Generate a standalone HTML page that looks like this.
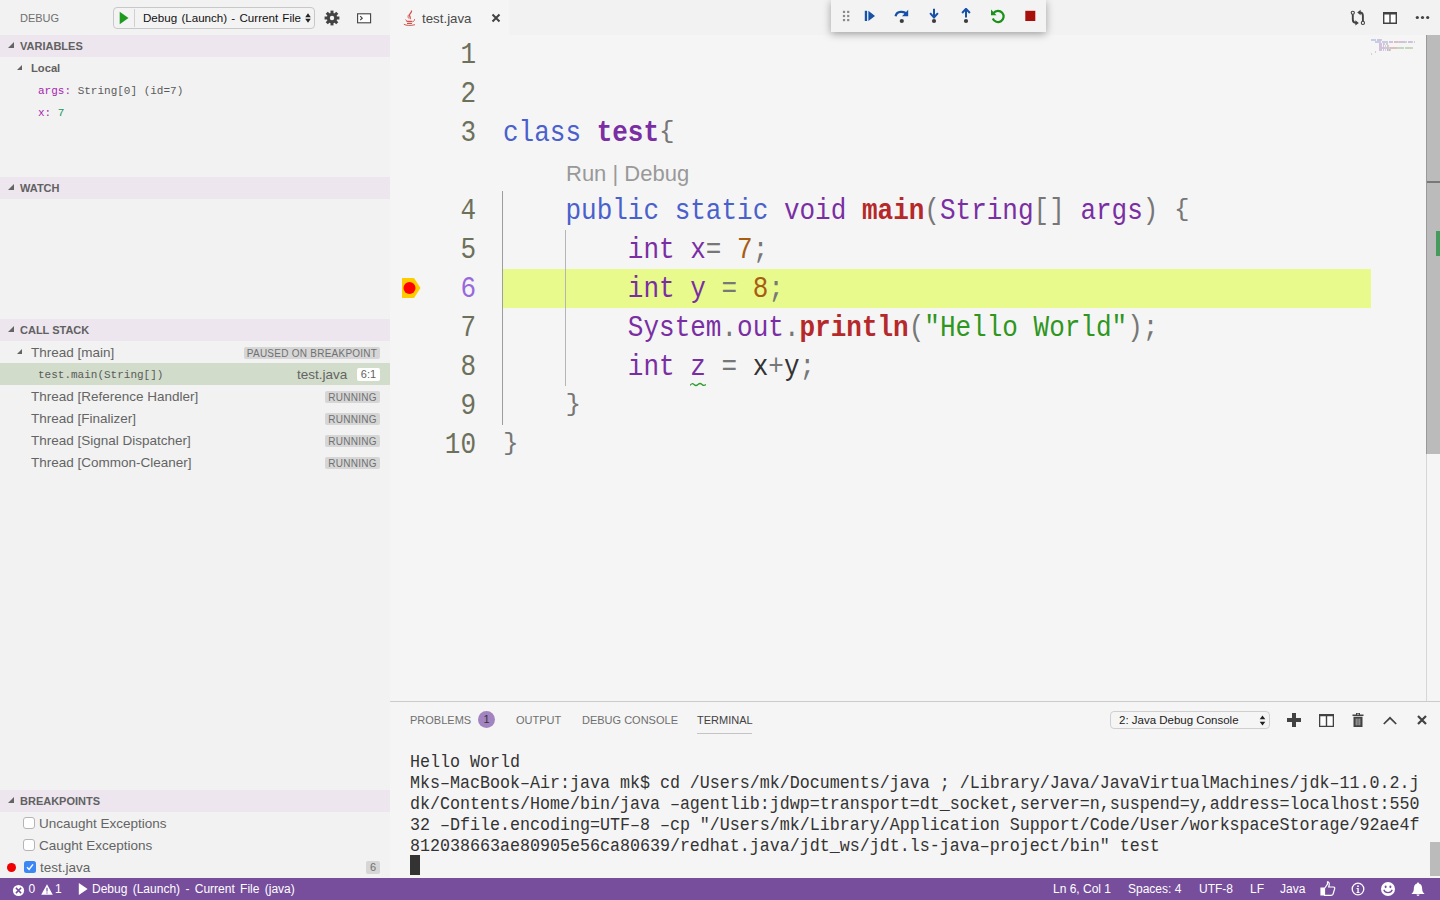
<!DOCTYPE html>
<html><head><meta charset="utf-8">
<style>
*{box-sizing:border-box;margin:0;padding:0}
html,body{width:1440px;height:900px;overflow:hidden;background:#f5f5f5;font-family:"Liberation Sans",sans-serif;}
.abs{position:absolute}
#sidebar{position:absolute;left:0;top:0;width:390px;height:878px;background:#f2f2f2;overflow:hidden}
.sh{position:absolute;left:0;width:390px;height:22px;background:#ede6ef;color:#616161;font-weight:bold;font-size:11px}
.sh span{position:absolute;left:20px;top:5px}
.tw{position:absolute;width:0;height:0;border-style:solid;border-width:0 0 6px 6px;border-color:transparent transparent #646464 transparent}
.row{position:absolute;left:0;width:390px;height:22px;font-size:13.5px;color:#646464}
.mono{font-family:"Liberation Mono",monospace}
#tabs{position:absolute;left:390px;top:0;width:1050px;height:35px;background:#f2f2f2}
#editor{position:absolute;left:390px;top:35px;width:1050px;height:666px;background:#f5f5f5;overflow:hidden}
.ln{position:absolute;left:0;width:86px;text-align:right;font-family:"Liberation Mono",monospace;font-size:26px;line-height:39px;height:39px;color:#6d705b;transform-origin:0 26.4px;transform:translateY(1.6px) scaleY(1.13)}
.cl{position:absolute;left:113px;white-space:pre;font-family:"Liberation Mono",monospace;font-size:26px;line-height:39px;height:39px;color:#333;transform-origin:0 26.4px;transform:translateY(1.6px) scaleY(1.13)}
.k{color:#4a60cc}.v{color:#7a2ea3}.tb{color:#7a2ea3;font-weight:bold}.fn{color:#b5292b;font-weight:bold}
.br{display:inline-block;transform:translateY(-1px) scaleY(0.84);transform-origin:50% 50%}
.n{color:#a85c12}.s{color:#2f961e}.p{color:#777777}
#panel{position:absolute;left:390px;top:701px;width:1050px;height:177px;background:#f5f5f5;border-top:1px solid #cbcbcb}
.pt{position:absolute;top:14px;font-size:11px;color:#6f6f6f}
.term{position:absolute;left:20px;white-space:pre;font-family:"Liberation Mono",monospace;font-size:16.67px;line-height:21px;color:#333}
.term div{height:21px;transform-origin:0 14.9px;transform:scaleY(1.15)}
#status{position:absolute;left:0;top:878px;width:1440px;height:22px;background:#774e9c;color:#fff;font-size:12px}
.badge{position:absolute;background:#d6d6d6;color:#707070;font-size:10px;height:12px;line-height:13.5px;border-radius:2px;text-align:center;letter-spacing:0.25px}
</style></head><body>

<div id="sidebar">
  <div class="abs" style="left:20px;top:12px;font-size:11px;color:#6f6f6f">DEBUG</div>
  <!-- launch dropdown -->
  <div class="abs" style="left:113px;top:7px;width:202px;height:22px;border:1px solid #c8c8c8;border-radius:4px;background:#f3f3f3"></div>
  <div class="abs" style="left:134px;top:9px;width:1px;height:18px;background:#d0d0d0"></div>
  <svg class="abs" style="left:119px;top:11px" width="10" height="14" viewBox="0 0 10 14"><path d="M0.7 0.8 L9.5 7 L0.7 13.2Z" fill="#1e9a1e"/></svg>
  <div class="abs" style="left:143px;top:11px;font-size:11.6px;word-spacing:1px;color:#111">Debug (Launch) - Current File</div>
  <svg class="abs" style="left:304px;top:13px" width="8" height="10" viewBox="0 0 8 10"><path d="M4 0.3 L6.8 4.2 H1.2Z M4 9.7 L6.8 5.8 H1.2Z" fill="#222"/></svg>
  <!-- gear -->
  <svg class="abs" style="left:324px;top:10px" width="16" height="16" viewBox="0 0 16 16"><g fill="#424242"><circle cx="8" cy="8" r="5.2"/><g id="teeth"><rect x="6.5" y="0.6" width="3" height="3"/><rect x="6.5" y="12.4" width="3" height="3"/><rect x="0.6" y="6.5" width="3" height="3"/><rect x="12.4" y="6.5" width="3" height="3"/></g><g transform="rotate(45 8 8)"><rect x="6.5" y="0.6" width="3" height="3"/><rect x="6.5" y="12.4" width="3" height="3"/><rect x="0.6" y="6.5" width="3" height="3"/><rect x="12.4" y="6.5" width="3" height="3"/></g></g><circle cx="8" cy="8" r="2.2" fill="#f2f2f2"/></svg>
  <!-- terminal icon -->
  <svg class="abs" style="left:356px;top:12px" width="16" height="12" viewBox="0 0 16 12"><rect x="1.6" y="1.8" width="13" height="9" fill="#fff" stroke="#424242" stroke-width="1.1"/><path d="M4.2 4.2 L6.2 6.2 L4.2 8.2" fill="none" stroke="#424242" stroke-width="1.2"/></svg>

  <!-- VARIABLES -->
  <div class="sh" style="top:35px"><div class="tw" style="left:8px;top:7px"></div><span>VARIABLES</span></div>
  <div class="row" style="top:57px"><div class="tw" style="left:17px;top:8px;border-width:0 0 5px 5px"></div><span class="abs" style="left:31px;top:5px;font-weight:bold;font-size:11.2px;color:#616161">Local</span></div>
  <div class="row mono" style="top:79px;font-size:11px"><span class="abs" style="left:38px;top:6px"><span style="color:#a626b0">args:</span> <span style="color:#5a5a5a">String[0] (id=7)</span></span></div>
  <div class="row mono" style="top:101px;font-size:11px"><span class="abs" style="left:38px;top:6px"><span style="color:#a626b0">x:</span> <span style="color:#14935a">7</span></span></div>

  <!-- WATCH -->
  <div class="sh" style="top:177px"><div class="tw" style="left:8px;top:7px"></div><span>WATCH</span></div>

  <!-- CALL STACK -->
  <div class="sh" style="top:319px"><div class="tw" style="left:8px;top:7px"></div><span>CALL STACK</span></div>
  <div class="row" style="top:341px"><div class="tw" style="left:17px;top:8px;border-width:0 0 5px 5px"></div><span class="abs" style="left:31px;top:4px">Thread [main]</span><span class="badge" style="left:244px;top:6px;width:136px">PAUSED ON BREAKPOINT</span></div>
  <div class="row" style="top:363px;background:#d1dcca"><span class="abs mono" style="left:38px;top:5.5px;font-size:11px;color:#5a5a5a">test.main(String[])</span><span class="abs" style="left:297px;top:4px">test.java</span><span class="abs" style="left:357px;top:5px;width:23px;height:13px;background:#fff;border-radius:2px;font-size:11px;text-align:center;line-height:13px;color:#616161">6:1</span></div>
  <div class="row" style="top:385px"><span class="abs" style="left:31px;top:4px">Thread [Reference Handler]</span><span class="badge" style="left:325px;top:6px;width:55px">RUNNING</span></div>
  <div class="row" style="top:407px"><span class="abs" style="left:31px;top:4px">Thread [Finalizer]</span><span class="badge" style="left:325px;top:6px;width:55px">RUNNING</span></div>
  <div class="row" style="top:429px"><span class="abs" style="left:31px;top:4px">Thread [Signal Dispatcher]</span><span class="badge" style="left:325px;top:6px;width:55px">RUNNING</span></div>
  <div class="row" style="top:451px"><span class="abs" style="left:31px;top:4px">Thread [Common-Cleaner]</span><span class="badge" style="left:325px;top:6px;width:55px">RUNNING</span></div>

  <!-- BREAKPOINTS -->
  <div class="sh" style="top:790px"><div class="tw" style="left:8px;top:7px"></div><span>BREAKPOINTS</span></div>
  <div class="row" style="top:812px"><div class="abs" style="left:23px;top:5px;width:12px;height:12px;border:1px solid #b5b5b5;border-radius:3px;background:#fff"></div><span class="abs" style="left:39px;top:4px">Uncaught Exceptions</span></div>
  <div class="row" style="top:834px"><div class="abs" style="left:23px;top:5px;width:12px;height:12px;border:1px solid #b5b5b5;border-radius:3px;background:#fff"></div><span class="abs" style="left:39px;top:4px">Caught Exceptions</span></div>
  <div class="row" style="top:856px"><div class="abs" style="left:7px;top:7px;width:9px;height:9px;border-radius:50%;background:#f00000"></div><svg class="abs" style="left:24px;top:5px" width="12" height="12" viewBox="0 0 12 12"><rect x="0" y="0" width="12" height="12" rx="2.5" fill="#3d87f5"/><path d="M3 6.2 L5.1 8.4 L9 3.4" fill="none" stroke="#fff" stroke-width="1.4"/></svg><span class="abs" style="left:40px;top:4px">test.java</span><span class="badge" style="left:366px;top:5px;width:14px;height:13px;line-height:13px;font-size:11px;letter-spacing:0">6</span></div>
</div>

<div id="tabs">
  <div class="abs" style="left:0;top:0;width:119px;height:35px;background:#f5f5f5"></div>
  <svg class="abs" style="left:10px;top:8px" width="20" height="20" viewBox="0 0 20 20"><g fill="none" stroke="#d4524b" stroke-linecap="round"><path d="M11.5 3 C12 4.5 9 5.5 9.5 7.5 C9.8 8.5 10.5 9 10.2 10.5" stroke-width="1.3"/><path d="M8.5 7 C7.8 8 8 9 8.4 10" stroke-width="1"/><path d="M7 13.4 H12 M7.5 15.4 H11.5" stroke-width="1.1"/><path d="M5.8 11.8 L6.6 12.8 M14.5 11.5 C14.5 12.8 13.8 13.5 13 13.8" stroke-width="0.9"/><path d="M4.2 16.5 C6 17.6 11 17.8 14.6 16.8" stroke-width="1"/></g></svg>
  <div class="abs" style="left:32px;top:10.7px;font-size:13.3px;color:#4a4a4a">test.java</div>
  <svg class="abs" style="left:101px;top:13px" width="10" height="10" viewBox="0 0 10 10"><path d="M1.5 1.5 L8.5 8.5 M8.5 1.5 L1.5 8.5" stroke="#424242" stroke-width="2"/></svg>
</div>

<div id="editor">
  <div class="abs" style="left:113px;top:234px;width:868px;height:39px;background:#e8fa8c"></div>
  <div class="abs" style="left:112px;top:156px;width:1px;height:234px;background:#9d9d9d"></div>
  <div class="abs" style="left:175px;top:195px;width:1px;height:156px;background:#b5b5b5"></div>
  <svg class="abs" style="left:12px;top:243px" width="19" height="20" viewBox="0 0 19 20"><path d="M0 0 H12 L18.5 10 L12 20 H0Z" fill="#ffcc00"/><circle cx="7.5" cy="10" r="6" fill="#f00"/></svg>
  <div class="ln" style="top:0px">1</div>
  <div class="ln" style="top:39px">2</div>
  <div class="ln" style="top:78px">3</div>
  <div class="ln" style="top:156px">4</div>
  <div class="ln" style="top:195px">5</div>
  <div class="ln" style="top:234px;color:#9769dc">6</div>
  <div class="ln" style="top:273px">7</div>
  <div class="ln" style="top:312px">8</div>
  <div class="ln" style="top:351px">9</div>
  <div class="ln" style="top:390px">10</div>
  <div class="cl" style="top:78px"><span class="k">class</span> <span class="tb">test</span><span class="p br">{</span></div>
  <div class="abs" style="left:176px;top:126px;font-size:22px;color:#999;white-space:pre">Run | Debug</div>
  <div class="cl" style="top:156px">    <span class="k">public</span> <span class="k">static</span> <span class="v">void</span> <span class="fn">main</span><span class="p">(</span><span class="v">String</span><span class="p">[]</span> <span class="v">args</span><span class="p">)</span> <span class="p br">{</span></div>
  <div class="cl" style="top:195px">        <span class="v">int</span> <span class="v">x</span><span class="p">=</span> <span class="n">7</span><span class="p">;</span></div>
  <div class="cl" style="top:234px">        <span class="v">int</span> <span class="v">y</span> <span class="p">=</span> <span class="n">8</span><span class="p">;</span></div>
  <div class="cl" style="top:273px">        <span class="v">System</span><span class="p">.</span><span class="v">out</span><span class="p">.</span><span class="fn">println</span><span class="p">(</span><span class="s">"Hello World"</span><span class="p">);</span></div>
  <div class="cl" style="top:312px">        <span class="v">int</span> <span class="v">z</span> <span class="p">=</span> x<span class="p">+</span>y<span class="p">;</span></div>
  <svg class="abs" style="left:300px;top:347px" width="16" height="5" viewBox="0 0 16 5"><path d="M0 3.5 Q2 0.5 4 2.5 T8 2.5 T12 2.5 T16 2.5" fill="none" stroke="#2f9e2f" stroke-width="1.2"/></svg>
  <div class="cl" style="top:351px">    <span class="p br">}</span></div>
  <div class="cl" style="top:390px"><span class="p br">}</span></div>
  <div class="abs" style="left:981px;top:0px;width:60px;height:22px;opacity:0.28"><div style="position:absolute;left:0px;top:4px;width:5px;height:2px;background:#4b69c6"></div><div style="position:absolute;left:6px;top:4px;width:4px;height:2px;background:#7a3e9d"></div><div style="position:absolute;left:10px;top:4px;width:1px;height:2px;background:#777777"></div><div style="position:absolute;left:4px;top:6px;width:6px;height:2px;background:#4b69c6"></div><div style="position:absolute;left:11px;top:6px;width:6px;height:2px;background:#4b69c6"></div><div style="position:absolute;left:18px;top:6px;width:4px;height:2px;background:#7a3e9d"></div><div style="position:absolute;left:23px;top:6px;width:4px;height:2px;background:#aa3731"></div><div style="position:absolute;left:27px;top:6px;width:1px;height:2px;background:#777777"></div><div style="position:absolute;left:28px;top:6px;width:6px;height:2px;background:#7a3e9d"></div><div style="position:absolute;left:34px;top:6px;width:2px;height:2px;background:#777777"></div><div style="position:absolute;left:37px;top:6px;width:4px;height:2px;background:#7a3e9d"></div><div style="position:absolute;left:41px;top:6px;width:1px;height:2px;background:#777777"></div><div style="position:absolute;left:43px;top:6px;width:1px;height:2px;background:#777777"></div><div style="position:absolute;left:8px;top:8px;width:3px;height:2px;background:#7a3e9d"></div><div style="position:absolute;left:12px;top:8px;width:1px;height:2px;background:#7a3e9d"></div><div style="position:absolute;left:13px;top:8px;width:1px;height:2px;background:#777777"></div><div style="position:absolute;left:15px;top:8px;width:1px;height:2px;background:#9c5d27"></div><div style="position:absolute;left:16px;top:8px;width:1px;height:2px;background:#777777"></div><div style="position:absolute;left:8px;top:10px;width:3px;height:2px;background:#7a3e9d"></div><div style="position:absolute;left:12px;top:10px;width:1px;height:2px;background:#7a3e9d"></div><div style="position:absolute;left:14px;top:10px;width:1px;height:2px;background:#777777"></div><div style="position:absolute;left:16px;top:10px;width:1px;height:2px;background:#9c5d27"></div><div style="position:absolute;left:17px;top:10px;width:1px;height:2px;background:#777777"></div><div style="position:absolute;left:8px;top:12px;width:6px;height:2px;background:#7a3e9d"></div><div style="position:absolute;left:14px;top:12px;width:1px;height:2px;background:#777777"></div><div style="position:absolute;left:15px;top:12px;width:3px;height:2px;background:#7a3e9d"></div><div style="position:absolute;left:18px;top:12px;width:1px;height:2px;background:#777777"></div><div style="position:absolute;left:19px;top:12px;width:7px;height:2px;background:#aa3731"></div><div style="position:absolute;left:26px;top:12px;width:1px;height:2px;background:#777777"></div><div style="position:absolute;left:27px;top:12px;width:6px;height:2px;background:#448c27"></div><div style="position:absolute;left:34px;top:12px;width:6px;height:2px;background:#448c27"></div><div style="position:absolute;left:40px;top:12px;width:2px;height:2px;background:#777777"></div><div style="position:absolute;left:8px;top:14px;width:3px;height:2px;background:#7a3e9d"></div><div style="position:absolute;left:12px;top:14px;width:1px;height:2px;background:#7a3e9d"></div><div style="position:absolute;left:14px;top:14px;width:1px;height:2px;background:#777777"></div><div style="position:absolute;left:16px;top:14px;width:1px;height:2px;background:#333333"></div><div style="position:absolute;left:17px;top:14px;width:1px;height:2px;background:#777777"></div><div style="position:absolute;left:18px;top:14px;width:1px;height:2px;background:#333333"></div><div style="position:absolute;left:19px;top:14px;width:1px;height:2px;background:#777777"></div><div style="position:absolute;left:4px;top:16px;width:1px;height:2px;background:#777777"></div><div style="position:absolute;left:0px;top:18px;width:1px;height:2px;background:#777777"></div></div>
  <!-- scrollbar -->
  <div class="abs" style="left:1036px;top:0;width:1px;height:666px;background:#d6d6d6"></div>
  <div class="abs" style="left:1036px;top:0;width:1px;height:419px;background:#999"></div>
  <div class="abs" style="left:1037px;top:0;width:13px;height:419px;background:#bbbbbb"></div>
  <div class="abs" style="left:1037px;top:146px;width:13px;height:2px;background:#787878"></div>
  <div class="abs" style="left:1046px;top:196px;width:4px;height:25px;background:#459b5d"></div>
</div>

<div id="panel">
  <div class="pt" style="left:20px;top:12px">PROBLEMS</div>
  <div class="abs" style="left:88px;top:9px;width:17px;height:17px;border-radius:50%;background:#a284c0;color:#333;font-size:11px;text-align:center;line-height:17px">1</div>
  <div class="pt" style="left:126px;top:12px">OUTPUT</div>
  <div class="pt" style="left:192px;top:12px">DEBUG CONSOLE</div>
  <div class="pt" style="left:307px;top:12px;color:#424242">TERMINAL</div>
  <div class="abs" style="left:307px;top:31px;width:55px;height:1px;background:#c4c4c4"></div>
  <div class="abs" style="left:720px;top:9px;width:160px;height:18px;border:1px solid #cfcfcf;border-radius:4px;background:#f5f5f5"></div>
  <div class="abs" style="left:729px;top:11.5px;font-size:11.5px;color:#222">2: Java Debug Console</div>
  <svg class="abs" style="left:869px;top:13px" width="7" height="11" viewBox="0 0 7 11"><path d="M3.5 0.5 L6.3 4.3 H0.7Z M3.5 10.5 L6.3 6.7 H0.7Z" fill="#222"/></svg>
  <svg class="abs" style="left:897px;top:11px" width="14" height="14" viewBox="0 0 14 14"><path d="M5 0 H9 V5 H14 V9 H9 V14 H5 V9 H0 V5 H5Z" fill="#424242"/></svg>
  <svg class="abs" style="left:929px;top:12px" width="15" height="13" viewBox="0 0 15 13"><rect x="1" y="2" width="13" height="10" fill="#fff"/><path d="M0 0 H15 V13 H0Z M1.3 2.2 V11.7 H6.8 V2.2Z M8.2 2.2 V11.7 H13.7 V2.2Z" fill="#424242" fill-rule="evenodd"/></svg>
  <svg class="abs" style="left:962px;top:11px" width="12" height="14" viewBox="0 0 12 14"><path d="M4 0 H8 V1.5 H11.5 V3 H0.5 V1.5 H4Z M5 0.8 V1.5 H7 V0.8Z M1.5 3.8 H10.5 V14 H1.5Z" fill="#424242" fill-rule="evenodd"/><path d="M4.2 5.5 V12.3 M6 5.5 V12.3 M7.8 5.5 V12.3" stroke="#e0e0e0" stroke-width="0.7"/></svg>
  <svg class="abs" style="left:993px;top:14px" width="14" height="9" viewBox="0 0 14 9"><path d="M0.8 8 L7 1.8 L13.2 8" fill="none" stroke="#424242" stroke-width="1.7"/></svg>
  <svg class="abs" style="left:1027px;top:13px" width="10" height="10" viewBox="0 0 10 10"><path d="M1 1 L9 9 M9 1 L1 9" stroke="#424242" stroke-width="2.2"/></svg>
  <div class="term" style="top:49.5px"><div>Hello World</div><div>Mks&#8211;MacBook&#8211;Air:java mk$ cd /Users/mk/Documents/java ; /Library/Java/JavaVirtualMachines/jdk&#8211;11.0.2.j</div><div>dk/Contents/Home/bin/java &#8211;agentlib:jdwp=transport=dt_socket,server=n,suspend=y,address=localhost:550</div><div>32 &#8211;Dfile.encoding=UTF&#8211;8 &#8211;cp "/Users/mk/Library/Application Support/Code/User/workspaceStorage/92ae4f</div><div>812038663ae80905e56ca80639/redhat.java/jdt_ws/jdt.ls-java&#8211;project/bin" test</div></div>
  <div class="abs" style="left:20px;top:153px;width:10px;height:20px;background:#333"></div>
  <div class="abs" style="left:1040px;top:140px;width:10px;height:34px;background:#bbbbbb"></div>
</div>

<div id="status">
  <svg class="abs" style="left:12px;top:5.5px" width="13" height="13" viewBox="0 0 13 13"><circle cx="6.5" cy="6.5" r="5.6" fill="#fff"/><path d="M3.9 3.9 L9.1 9.1 M9.1 3.9 L3.9 9.1" stroke="#774e9c" stroke-width="1.5"/></svg>
  <div class="abs" style="left:28.5px;top:4px">0</div>
  <svg class="abs" style="left:41px;top:6px" width="12" height="11" viewBox="0 0 12 11"><path d="M6 0.3 L11.8 10.7 H0.2Z" fill="#fff"/><path d="M6 3.8 V7.4 M6 8.4 V9.6" stroke="#774e9c" stroke-width="1.2"/></svg>
  <div class="abs" style="left:55px;top:4px">1</div>
  <svg class="abs" style="left:78px;top:5px" width="10" height="12" viewBox="0 0 10 12"><path d="M0.8 0 L9.6 6 L0.8 12Z" fill="#fff"/></svg>
  <div class="abs" style="left:92px;top:4px;word-spacing:2px">Debug (Launch) - Current File (java)</div>
  <div class="abs" style="left:1053px;top:4px">Ln 6, Col 1</div>
  <div class="abs" style="left:1128px;top:4px">Spaces: 4</div>
  <div class="abs" style="left:1199px;top:4px">UTF-8</div>
  <div class="abs" style="left:1250px;top:4px">LF</div>
  <div class="abs" style="left:1280px;top:4px">Java</div>
  <svg class="abs" style="left:1320px;top:3px" width="16" height="15" viewBox="0 0 16 15"><path d="M1 7 H4 V14 H1Z M4.5 7.5 L7.5 3 V0.8 C9 0.8 9.5 2 9.2 4 L8.7 6 H13.5 C14.6 6 15 7 14.6 8 L13 13.2 C12.7 14 12 14.3 11 14.3 H4.5Z" fill="none" stroke="#fff" stroke-width="1.2"/><path d="M1 7 H4 V14 H1Z" fill="#fff"/></svg>
  <svg class="abs" style="left:1351px;top:4px" width="14" height="14" viewBox="0 0 14 14"><circle cx="7" cy="7" r="5.8" fill="none" stroke="#fff" stroke-width="1.3"/><circle cx="7" cy="4.2" r="0.9" fill="#fff"/><path d="M5.6 6 H7.7 V10 H8.5 V10.9 H5.6 V10 H6.4 V6.9 H5.6Z" fill="#fff"/></svg>
  <svg class="abs" style="left:1380px;top:3px" width="16" height="16" viewBox="0 0 16 16"><circle cx="8" cy="8" r="7" fill="#fff"/><ellipse cx="5.6" cy="5.8" rx="1" ry="1.4" fill="#774e9c"/><ellipse cx="10.4" cy="5.8" rx="1" ry="1.4" fill="#774e9c"/><path d="M3.8 8.8 C5 12.5 11 12.5 12.2 8.8" fill="none" stroke="#774e9c" stroke-width="1.3"/></svg>
  <svg class="abs" style="left:1411px;top:4px" width="14" height="14" viewBox="0 0 14 14"><path d="M7 0.5 C7.8 0.5 8 1 8 1.5 C10.5 2.2 11.2 4.5 11.2 7 C11.2 9.5 12 10.5 13.3 11.5 V12 H0.7 V11.5 C2 10.5 2.8 9.5 2.8 7 C2.8 4.5 3.5 2.2 6 1.5 C6 1 6.2 0.5 7 0.5Z M5.5 12.5 H8.5 C8.5 13.4 7.8 13.9 7 13.9 C6.2 13.9 5.5 13.4 5.5 12.5Z" fill="#fff"/></svg>
</div>

<div class="abs" style="left:831px;top:0;width:215px;height:32px;background:#f3f3f3;box-shadow:0 2px 8px rgba(0,0,0,0.35)">
  <svg class="abs" style="left:11px;top:10px" width="8" height="12" viewBox="0 0 8 12"><g fill="#8a8a8a"><rect x="0.9" y="0.8" width="2.2" height="2.2"/><rect x="5.1" y="0.8" width="2.2" height="2.2"/><rect x="0.9" y="4.9" width="2.2" height="2.2"/><rect x="5.1" y="4.9" width="2.2" height="2.2"/><rect x="0.9" y="9" width="2.2" height="2.2"/><rect x="5.1" y="9" width="2.2" height="2.2"/></g></svg>
  <svg class="abs" style="left:33px;top:10px" width="12" height="12" viewBox="0 0 12 12"><rect x="0.8" y="0.8" width="2.3" height="10.2" fill="#1752a8"/><path d="M4.4 0.8 L11 5.9 L4.4 11Z" fill="#1752a8"/></svg>
  <svg class="abs" style="left:63px;top:8px" width="16" height="16" viewBox="0 0 16 16"><path d="M1.6 8.2 C2.5 3 10.5 2.5 12.5 6.5" fill="none" stroke="#1752a8" stroke-width="2.3"/><path d="M14.2 1.8 V8.2 H8Z" fill="#1752a8"/><circle cx="7.8" cy="13" r="2.1" fill="#3c3c3c"/></svg>
  <svg class="abs" style="left:97px;top:8px" width="12" height="16" viewBox="0 0 12 16"><path d="M6 0.7 V8.5" stroke="#1752a8" stroke-width="2"/><path d="M2.1 5.2 L6 9.5 L9.9 5.2" fill="none" stroke="#1752a8" stroke-width="2"/><circle cx="6" cy="13" r="2.1" fill="#3c3c3c"/></svg>
  <svg class="abs" style="left:129px;top:8px" width="12" height="16" viewBox="0 0 12 16"><path d="M6 1.5 V9.5" stroke="#1752a8" stroke-width="2"/><path d="M2.1 5 L6 0.8 L9.9 5" fill="none" stroke="#1752a8" stroke-width="2"/><circle cx="6" cy="13" r="2.1" fill="#3c3c3c"/></svg>
  <svg class="abs" style="left:159px;top:8px" width="16" height="16" viewBox="0 0 16 16"><path d="M3.6 5 A5.6 5.6 0 1 1 2.8 10.5" fill="none" stroke="#1a911a" stroke-width="2.2"/><path d="M1 1.5 V7.2 H6.5Z" fill="#1a911a"/></svg>
  <svg class="abs" style="left:194px;top:10px" width="11" height="12" viewBox="0 0 11 12"><rect x="0.3" y="0.8" width="10" height="10.2" fill="#a80f0a"/></svg>
</div>
<svg class="abs" style="left:1350px;top:9px" width="17" height="18" viewBox="0 0 17 18"><g fill="none" stroke="#424242" stroke-width="1.9"><path d="M2.8 5.2 V10.5 C2.8 12.8 4.2 13.9 6.2 13.9"/><path d="M9.8 3.5 C12 3.5 12.9 4.8 12.9 6.8 V12.3"/></g><path d="M5.4 11.2 L8.8 13.9 L5.4 16.6Z" fill="#424242"/><path d="M10.6 0.8 L7.2 3.5 L10.6 6.2Z" fill="#424242"/><circle cx="2.8" cy="3.8" r="1.6" fill="#f2f2f2" stroke="#424242" stroke-width="1.1"/><circle cx="12.9" cy="13.9" r="1.6" fill="#f2f2f2" stroke="#424242" stroke-width="1.1"/></svg>
<svg class="abs" style="left:1382px;top:11px" width="16" height="14" viewBox="0 0 16 14"><rect x="2" y="3" width="12" height="9" fill="#fff"/><path d="M1 1 H15 V13 H1Z M2.4 3.5 V11.6 H7.3 V3.5Z M8.7 3.5 V11.6 H13.6 V3.5Z" fill="#424242" fill-rule="evenodd"/></svg>
<svg class="abs" style="left:1415px;top:15px" width="15" height="5" viewBox="0 0 15 5"><circle cx="2.3" cy="2.5" r="1.6" fill="#424242"/><circle cx="7.5" cy="2.5" r="1.6" fill="#424242"/><circle cx="12.7" cy="2.5" r="1.6" fill="#424242"/></svg>
</body></html>
